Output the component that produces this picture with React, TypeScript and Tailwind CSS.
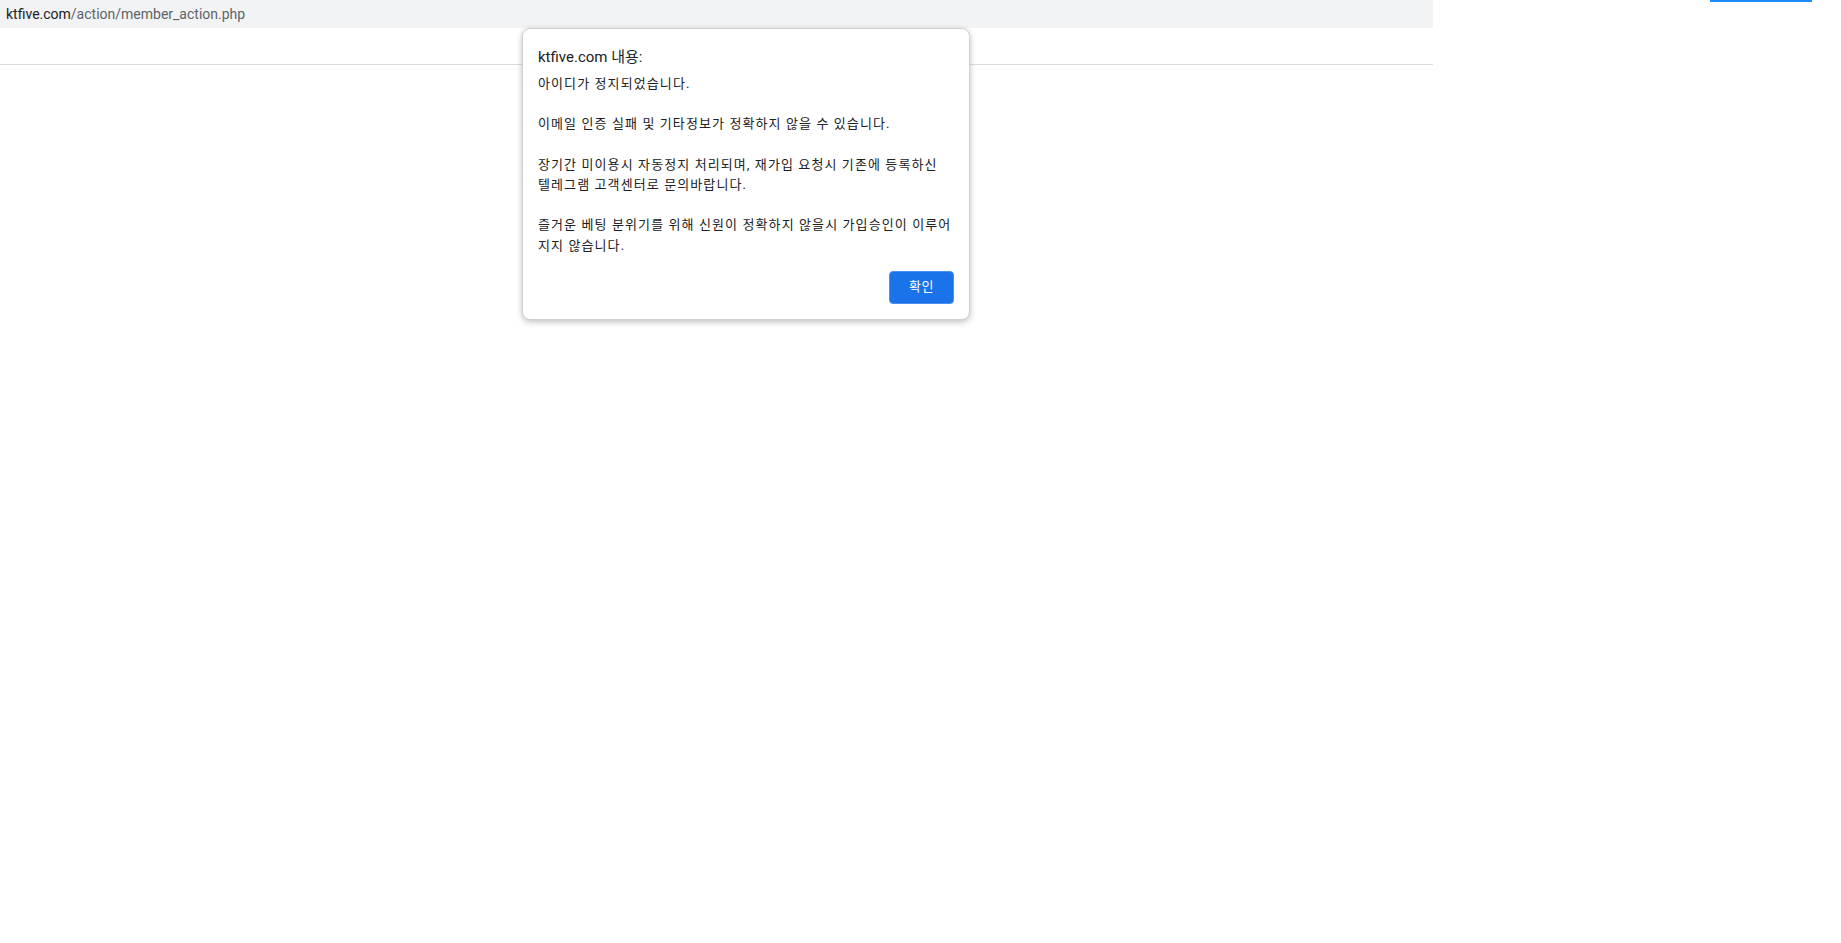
import React from 'react';

const lines = [
  '아이디가 정지되었습니다.',
  '',
  '이메일 인증 실패 및 기타정보가 정확하지 않을 수 있습니다.',
  '',
  '장기간 미이용시 자동정지 처리되며, 재가입 요청시 기존에 등록하신',
  '텔레그램 고객센터로 문의바랍니다.',
  '',
  '즐거운 베팅 분위기를 위해 신원이 정확하지 않을시 가입승인이 이루어',
  '지지 않습니다.',
];

const App: React.FC = () => {
  return (
    <div
      className="relative w-[1841px] h-[943px] bg-white overflow-hidden"
      style={{ fontFamily: 'Roboto, "Noto Sans CJK KR", sans-serif' }}
    >
      {/* Page header strip */}
      <div className="w-[1433px]">
        <div className="h-[28px] bg-[#f1f3f4] flex items-center pl-[6px] text-[14px] leading-none">
          <span className="text-[#202124]">ktfive.com</span>
          <span className="text-[#5f6368]">/action/member_action.php</span>
        </div>
        <div className="h-[37px] border-b border-[#dadce0]" />
      </div>

      {/* Top right accent */}
      <div className="absolute top-0 left-[1710px] w-[102px] h-[2px] bg-[#1a8cff]" />

      {/* Alert dialog */}
      <div className="absolute left-[522px] top-[28px] w-[448px] bg-white rounded-[8px] border border-[#d0d0d0] shadow-[0_2px_6px_rgba(0,0,0,0.25)] px-[15px] pt-[17px] pb-[15px] text-[#202124]">
        <p className="text-[15px] leading-[22px]">ktfive.com 내용:</p>
        <div className="mt-[6px] text-[13px] leading-[20.2px] tracking-[1.1px] whitespace-pre">
          {lines.map((l, i) => (
            <div key={i} className="h-[20.2px]">
              {l}
            </div>
          ))}
        </div>
        <div className="flex justify-end mt-[15px]">
          <button className="w-[65px] h-[33px] rounded-[4px] bg-[#1a73e8] border border-[#4c8ff0] text-white text-[13px] tracking-[0.5px]">
            확인
          </button>
        </div>
      </div>
    </div>
  );
};

export default App;
